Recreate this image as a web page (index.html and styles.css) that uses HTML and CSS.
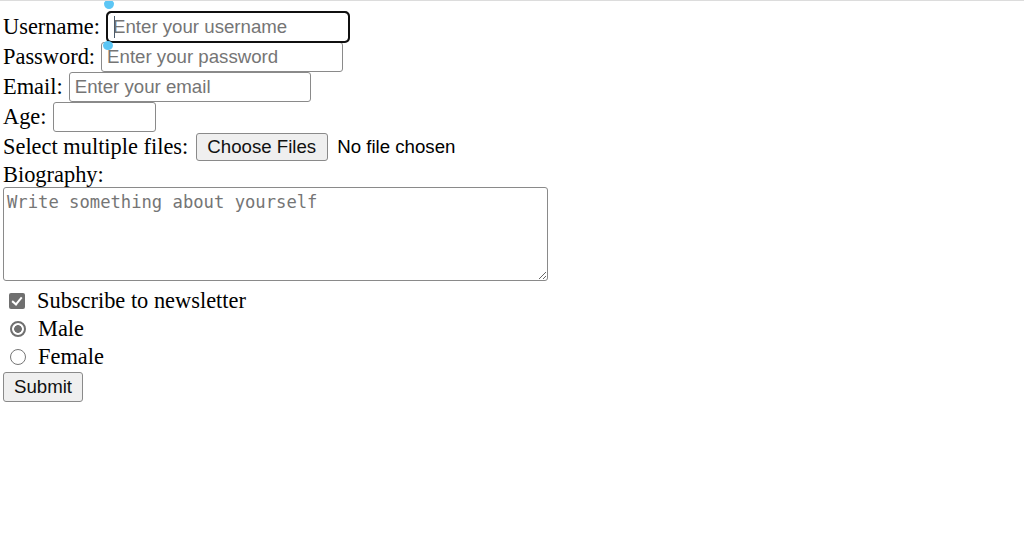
FILE: index.html
```html
<!DOCTYPE html>
<html lang="en">
<head>
<meta charset="UTF-8">
<meta name="viewport" content="width=device-width, initial-scale=1.0">
<title>Sign up</title>
<link rel="stylesheet" href="styles.css">
</head>
<body>
<form class="signup" action="#" onsubmit="return false">
<div class="row">
<label for="username">Username:</label>
<span class="focus-wrap">
<input id="username" class="field field-focused" type="text" placeholder="Enter your username">
<span class="caret"></span>
<span class="handle handle-top"></span>
<span class="handle handle-bottom"></span>
</span>
</div>
<div class="row">
<label for="password">Password:</label>
<input id="password" class="field" type="password" placeholder="Enter your password">
</div>
<div class="row">
<label for="email">Email:</label>
<input id="email" class="field" type="email" placeholder="Enter your email">
</div>
<div class="row">
<label for="age">Age:</label>
<input id="age" class="field field-age" type="number">
</div>
<div class="row row-files">
<label for="files">Select multiple files:</label>
<input id="files" class="files" type="file" multiple>
</div>
<div class="row row-text">
<label for="bio">Biography:</label>
</div>
<textarea id="bio" class="bio" placeholder="Write something about yourself"></textarea>
<div class="row row-choice">
<input id="newsletter" class="check" type="checkbox" checked>
<label for="newsletter">Subscribe to newsletter</label>
</div>
<div class="row row-choice">
<input id="male" class="radio" type="radio" name="gender" value="male" checked>
<label for="male">Male</label>
</div>
<div class="row row-choice">
<input id="female" class="radio" type="radio" name="gender" value="female">
<label for="female">Female</label>
</div>
<div class="row-submit">
<button type="submit" class="submit">Submit</button>
</div>
</form>
</body>
</html>
```

FILE: styles.css
```css
/* Basic Reset */
*{box-sizing:border-box;}
html,body{background:#fff;}
body{margin:0;padding:11px 3px 0;border-top:1px solid #dcdcdc;font-family:'Liberation Serif','Times New Roman',serif;font-size:22.4px;color:#000;}

.signup{display:flex;flex-direction:column;align-items:flex-start;}
.row{display:flex;align-items:center;gap:6px;height:30px;white-space:nowrap;}
.row-text{height:25px;}
.row-files{gap:8px;}

/* text inputs */
.field{width:242px;height:30px;padding:0 5px;font-family:'Liberation Sans',Arial,sans-serif;font-size:18.67px;color:#111;background:#fff;border:1px solid #8a8a8a;border-radius:3px;outline:none;}
.field::placeholder{color:#757575;}
.field-age{width:103px;}
.field-focused{outline:2px solid #101010;outline-offset:-1px;border-color:#101010;border-radius:4px;}
.focus-wrap{position:relative;display:inline-flex;margin-left:1px;}
.caret{position:absolute;left:7px;top:4px;width:1px;height:22px;background:#4a5a6a;}
.handle{position:absolute;width:10px;height:9px;background:#5cc6f5;border-radius:50%;}
.handle-top{left:-3px;top:-12px;border-radius:50% 50% 50% 50%/40% 40% 60% 60%;}
.handle-bottom{left:-4px;top:29px;}

/* file picker */
.files{font-family:'Liberation Sans',Arial,sans-serif;font-size:18.67px;color:#000;}
.files::file-selector-button{height:28px;padding:0 11px 0 10px;margin:0 9px 0 0;font-family:'Liberation Sans',Arial,sans-serif;font-size:18.67px;color:#111;background:#efefef;border:1px solid #8a8a8a;border-radius:3px;}

/* biography */
.bio{display:block;width:545px;height:94px;margin:0 0 6px;padding:4px 3px;font-family:'DejaVu Sans Mono','Liberation Mono',monospace;font-size:17.2px;color:#111;border:1px solid #8a8a8a;border-radius:3px;resize:both;}
.bio::placeholder{color:#757575;}

/* checkbox + radios */
.row-choice{height:28px;gap:12px;}
.check,.radio{appearance:none;-webkit-appearance:none;margin:0 0 0 6px;position:relative;flex:none;}
.check{width:16px;height:16px;background:#6f6f6f;border-radius:2px;}
.check:checked::after{content:'';position:absolute;left:5px;top:2px;width:4px;height:8px;border:solid #fff;border-width:0 2px 2px 0;transform:rotate(40deg);}
.radio{width:16px;height:16px;margin-left:7px;border:1px solid #767676;border-radius:50%;background:#fff;}
.radio:checked{border:2px solid #6f6f6f;background:radial-gradient(circle,#6f6f6f 0 3.5px,#fff 4.2px);}

/* submit */
.row-submit{margin-top:1px;}
.submit{width:80px;height:30px;padding:0;font-family:'Liberation Sans',Arial,sans-serif;font-size:18.67px;color:#111;background:#efefef;border:1px solid #8a8a8a;border-radius:3px;}
```
